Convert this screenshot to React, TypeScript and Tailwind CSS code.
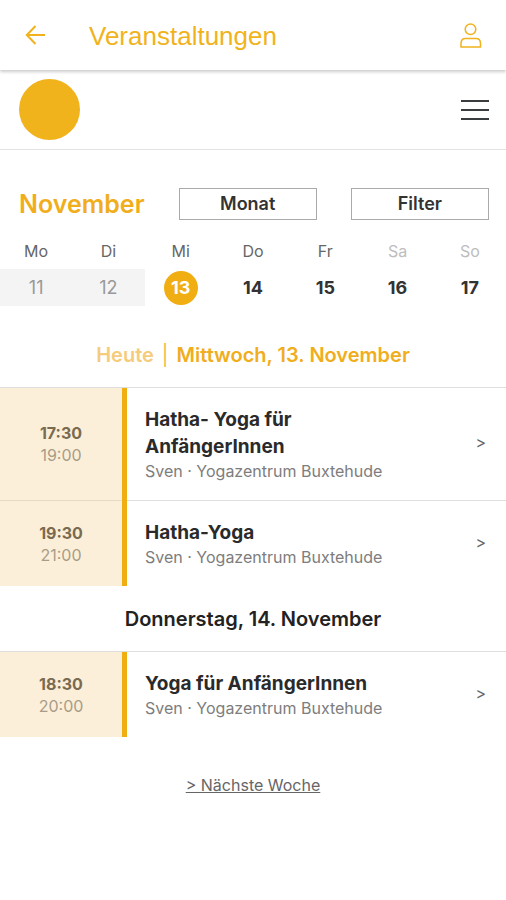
type Course = { start: string; end: string; title: string; info: string };
type Day = { label: string; today?: boolean; courses: Course[] };

const info = "Sven · Yogazentrum Buxtehude";

const days: Day[] = [
  {
    label: "Mittwoch, 13. November",
    today: true,
    courses: [
      { start: "17:30", end: "19:00", title: "Hatha- Yoga für AnfängerInnen", info },
      { start: "19:30", end: "21:00", title: "Hatha-Yoga", info },
    ],
  },
  {
    label: "Donnerstag, 14. November",
    courses: [{ start: "18:30", end: "20:00", title: "Yoga für AnfängerInnen", info }],
  },
];

const week = [
  { name: "Mo", date: 11, state: "past" },
  { name: "Di", date: 12, state: "past" },
  { name: "Mi", date: 13, state: "today" },
  { name: "Do", date: 14, state: "open" },
  { name: "Fr", date: 15, state: "open" },
  { name: "Sa", date: 16, state: "weekend" },
  { name: "So", date: 17, state: "weekend" },
];

function BackIcon() {
  return (
    <svg width="20" height="20" viewBox="0 0 20 20" fill="none" stroke="currentColor" strokeWidth="2">
      <path d="M10.500 1 1.800 10l8.700 9M2 10h18" />
    </svg>
  );
}

function UserIcon() {
  return (
    <svg width="22" height="25" viewBox="0 0 22 25" fill="none" stroke="currentColor" strokeWidth="1.500">
      <circle cx="10.500" cy="6.300" r="5.300" />
      <path d="M1 24v-3.500c0-3 1.500-5 4.500-5h10.500c3 0 4.500 2 4.500 5V24z" />
    </svg>
  );
}

function MenuIcon() {
  return (
    <svg width="28" height="22" viewBox="0 0 28 22" fill="none" stroke="currentColor" strokeWidth="2">
      <path d="M0 2h28M0 11h28M0 20h28" />
    </svg>
  );
}

function CourseRow({ course, divided }: { course: Course; divided: boolean }) {
  const line = divided ? "border-t" : "";
  return (
    <li>
      <a href="#kurs" className="flex">
        <span
          className={`flex w-[122px] shrink-0 flex-col items-center justify-center border-[#e6dac5] bg-[#fcefd9] text-base leading-[22px] ${line}`}
        >
          <span className="font-bold text-[#7a6a50]">{course.start}</span>
          <span className="text-[#a89c88]">{course.end}</span>
        </span>
        <span className="w-[5px] shrink-0 bg-[#f0ae13]" />
        <span className={`flex grow items-center justify-between border-[#dedede] py-[18px] pr-5 pl-[18px] ${line}`}>
          <span className="flex max-w-[280px] flex-col">
            <span className="text-[19px] leading-[27px] font-bold text-[#2a2a2a]">{course.title}</span>
            <span className="text-base leading-[22px] text-[#7d7d7d]">{course.info}</span>
          </span>
          <span className="pb-1 text-base text-[#666]">&gt;</span>
        </span>
      </a>
    </li>
  );
}

export default function App() {
  return (
    <div className="min-h-screen bg-white font-['Inter',sans-serif] text-[#333]">
      <header className="flex h-[70px] items-center pr-6 pl-[25px] text-[#f0b31c] shadow-[0_2px_3px_rgba(0,0,0,0.2)]">
        <button type="button" aria-label="Zurück">
          <BackIcon />
        </button>
        <h1 className="grow pt-0.5 pl-11 font-['Liberation_Sans',sans-serif] text-[26px]">Veranstaltungen</h1>
        <button type="button" aria-label="Profil">
          <UserIcon />
        </button>
      </header>

      <nav className="flex h-20 items-center justify-between border-b border-[#e4e4e4] pr-[17px] pl-[19px]">
        <a href="#start" aria-label="Startseite" className="size-[61px] rounded-full bg-[#f1b31c]" />
        <button type="button" aria-label="Menü" className="text-[#3a3d40]">
          <MenuIcon />
        </button>
      </nav>

      <main>
        <div className="flex items-center gap-[34px] pt-[38px] pr-[17px] pl-[19px]">
          <h2 className="text-[25px] leading-8 font-semibold text-[#f0ae1c]">November</h2>
          <button type="button" className="h-8 grow basis-0 border border-[#aaa] text-lg font-semibold">
            Monat
          </button>
          <button type="button" className="h-8 grow basis-0 border border-[#aaa] text-lg font-semibold">
            Filter
          </button>
        </div>

        <div className="grid grid-cols-7 pt-5 text-center">
          {week.map((d) => (
            <button type="button" key={d.name} className="flex flex-col">
              <span
                className={`w-full pb-[7px] text-base leading-[22px] ${d.state === "weekend" ? "text-[#bdbdbd]" : "text-[#666]"}`}
              >
                {d.name}
              </span>
              <span
                className={`flex h-[37px] w-full items-center justify-center text-lg ${d.state === "past" ? "bg-[#f4f4f4] text-[#999]" : "font-bold"}`}
              >
                {d.state === "today" ? (
                  <span className="flex size-[34px] items-center justify-center rounded-full bg-[#f0ae13] text-white">
                    {d.date}
                  </span>
                ) : (
                  d.date
                )}
              </span>
            </button>
          ))}
        </div>

        <div className="pt-4">
          {days.map((day) => (
            <section key={day.label}>
              <h3
                className={`flex h-[66px] items-center justify-center border-b border-[#dedede] text-xl font-semibold ${day.today ? "text-[#f0ae1c]" : "text-[#222]"}`}
              >
                {day.today && (
                  <span className="flex gap-2 pr-2 text-[#f5cb7c]">
                    Heute <span className="font-normal text-[#f0b84a]">|</span>
                  </span>
                )}
                {day.label}
              </h3>
              <ul>
                {day.courses.map((c, i) => (
                  <CourseRow key={c.start} course={c} divided={i > 0} />
                ))}
              </ul>
            </section>
          ))}
        </div>

        <div className="flex justify-center pt-[37px] pb-8">
          <a href="#naechste-woche" className="text-base leading-[22px] text-[#666] underline">
            &gt; Nächste Woche
          </a>
        </div>
      </main>
    </div>
  );
}
